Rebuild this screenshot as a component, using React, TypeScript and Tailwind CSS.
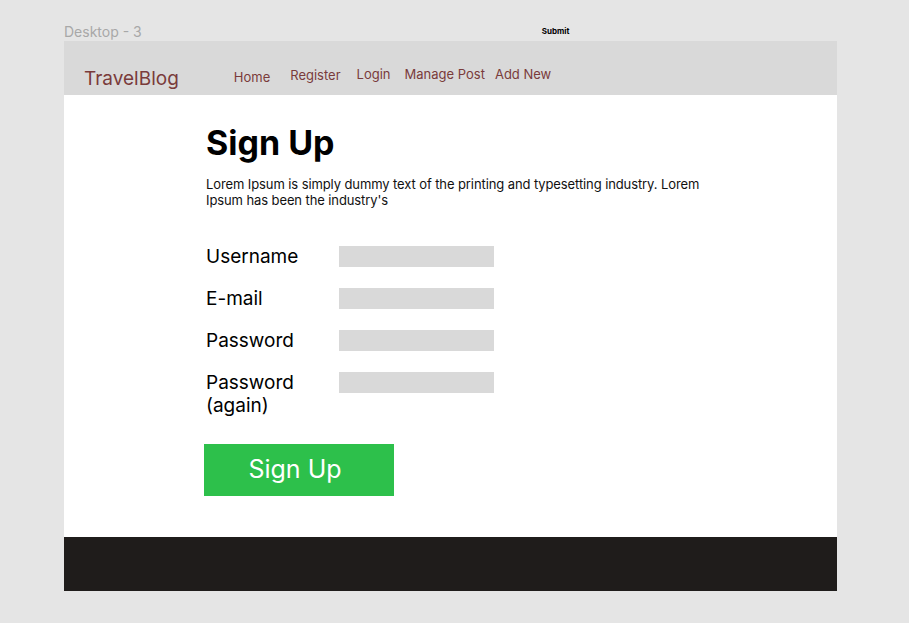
export default function App() {
  const fields = ['Username', 'E-mail', 'Password', 'Password (again)']

  return (
    <div className="min-h-[623px] w-[909px] bg-[#e5e5e5] font-['Inter',sans-serif] relative">
      <div className="flex h-[41px] items-start pt-[22px] pl-[64px]">
        <span className="text-[14px] leading-[20px] text-[#a8a8a8]">Desktop - 3</span>
        <span className="ml-[400px] mt-[3px] text-[8px] font-bold text-black">Submit</span>
      </div>

      <div className="ml-[64px] w-[773px] bg-white">
        {/* header */}
        <header className="flex h-[54px] items-start bg-[#d9d9d9] text-[#7a3b3b]">
          <span className="ml-[20px] mt-[26px] text-[19px] leading-[24px]">TravelBlog</span>
          <nav className="ml-[55px] flex text-[13px] leading-[16px]">
            <span className="mt-[28px]">Home</span>
            <span className="ml-[20px] mt-[26px]">Register</span>
            <span className="ml-[16px] mt-[25px]">Login</span>
            <span className="ml-[14px] mt-[25px]">Manage Post</span>
            <span className="ml-[10px] mt-[25px]">Add New</span>
          </nav>
        </header>

        {/* body */}
        <main className="h-[442px] pl-[142px] pt-[22px]">
          <h1 className="text-[34px] font-bold leading-[52px] text-black">Sign Up</h1>
          <p className="mt-[7px] w-[505px] text-[13px] leading-[16px] tracking-[-0.1px] text-[#111]">
            Lorem Ipsum is simply dummy text of the printing and typesetting industry. Lorem Ipsum has been the industry's
          </p>

          <div className="mt-[37px] flex flex-col gap-[19px]">
            {fields.map((f) => (
              <div key={f} className="flex items-start">
                <label className="w-[133px] text-[19px] leading-[23px] text-black">
                  {f === 'Password (again)' ? (
                    <>
                      Password
                      <br />
                      (again)
                    </>
                  ) : (
                    f
                  )}
                </label>
                <div className="mt-[1px] h-[21px] w-[155px] bg-[#d9d9d9]" />
              </div>
            ))}
          </div>

          <button className="-ml-[2px] mt-[27px] flex h-[52px] w-[190px] items-center justify-center bg-[#2dc04b] pr-[8px] text-[25px] text-white">
            Sign Up
          </button>
        </main>

        {/* footer */}
        <footer className="h-[54px] bg-[#1f1c1b]" />
      </div>
    </div>
  )
}
